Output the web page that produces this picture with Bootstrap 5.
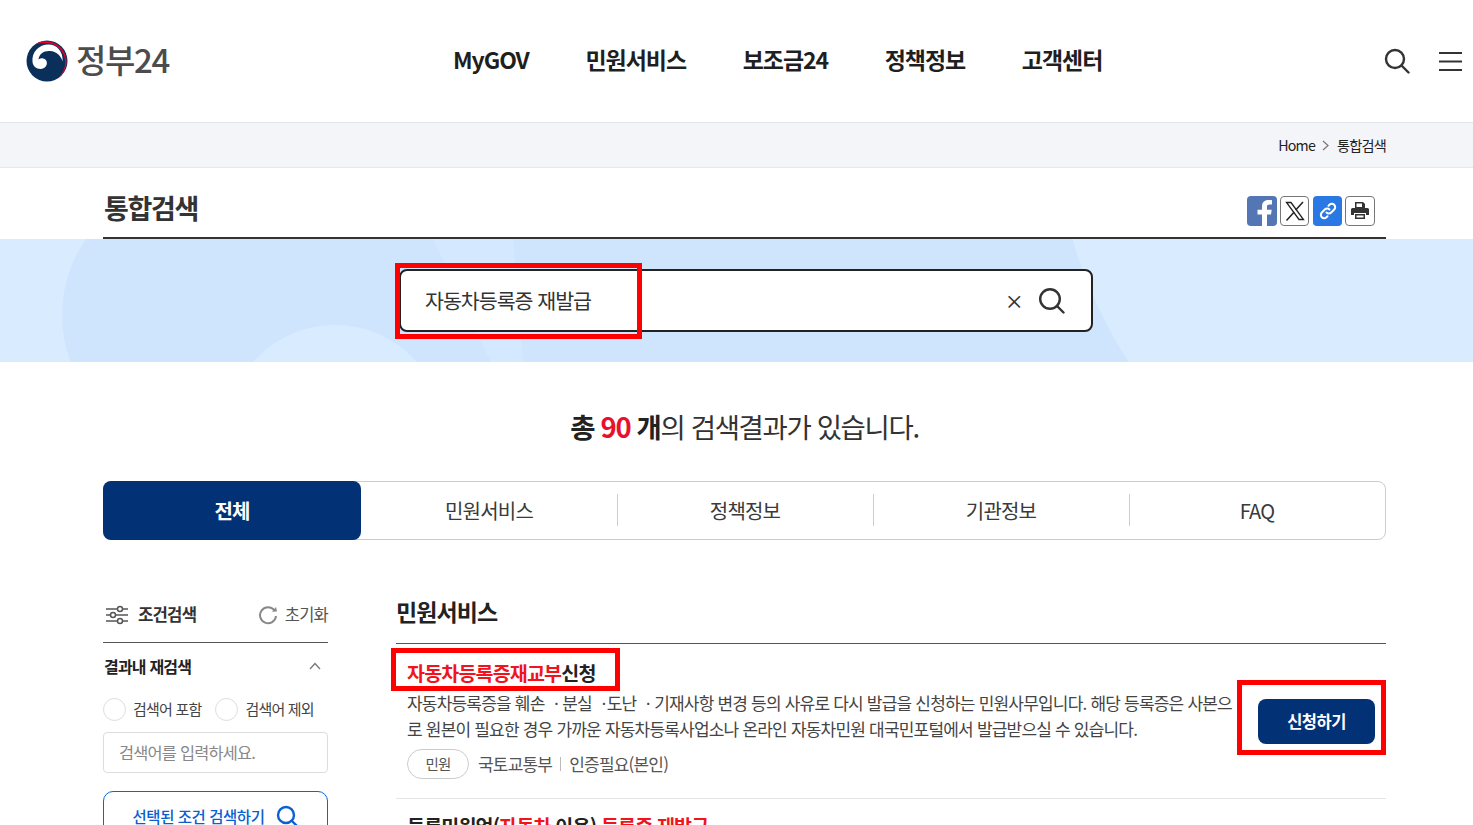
<!DOCTYPE html>
<html lang="ko">
<head>
<meta charset="utf-8">
<title>정부24 통합검색</title>
<link href="https://cdn.jsdelivr.net/npm/bootstrap@5.3.0/dist/css/bootstrap.min.css" rel="stylesheet">
<style>
html,body{height:825px;overflow:hidden;}
body{font-family:"Noto Sans CJK KR","Noto Sans",sans-serif;color:#222;background:#fff;letter-spacing:-.05em;}
a{text-decoration:none;color:inherit;}
.page{height:825px;overflow:hidden;position:relative;}
.top-bar{height:122px;padding:0 11px 0 26px;}
.logo-txt{font-size:33px;font-weight:500;color:#4c4c4c;letter-spacing:-.04em;line-height:1;margin-left:8px;padding-bottom:3px;}
.logo-wrap{width:300px;padding-bottom:1px;}
.gnb{gap:56.6px;font-size:23px;font-weight:700;color:#1f1f1f;margin-left:127px;letter-spacing:-.045em;padding-bottom:4px;}
.crumb-bar{height:46px;background:#f4f5f9;border-top:1px solid #e3e5ec;border-bottom:1px solid #e8e8e8;padding:1px 87px 0 0;font-size:14.2px;color:#222;}
.chev{margin:0 7.5px;}
.wrapx{width:1283px;margin-left:103px;}
.title-row{height:71px;border-bottom:2px solid #333;padding-top:21px;}
.page-title{font-size:27px;font-weight:700;color:#333;margin:-1px 0 0 1px;line-height:39px;letter-spacing:-.05em;}
.share{gap:3px;padding-top:7px;margin-right:11px;}
.sbtn{width:30px;height:30px;border-radius:4px;border:1px solid #777;background:#fff;}
.sbtn.fb{background:#5476b4;border:0;overflow:hidden;}
.sbtn.lnk{background:#2a78e4;border:0;width:29px;margin-left:1px;}
.sbtn.xb{width:29px;}
.band{height:123px;background:#cfe5fe;position:relative;overflow:hidden;padding-top:30px;}
.shape{position:absolute;display:block;}
.left-pale{left:0;top:0;width:194px;height:123px;background:#d9ebff;}
.left-circ{left:62px;top:-56px;width:264px;height:264px;border-radius:50%;background:#cfe5fe;}
.faint{left:433px;top:0;width:90px;height:123px;background:#d4e8ff;clip-path:polygon(0 0,89% 0,100% 100%,64% 100%);}
.mid-circ{left:226px;top:86px;width:218px;height:218px;border-radius:50%;background:#d9ebff;}
.right-circ{left:1055px;top:-574px;width:900px;height:900px;border-radius:50%;background:#d9ebff;}
.sbox{position:relative;width:694px;height:63px;margin-left:399px;background:#fff;border:2px solid #222;border-radius:8px;padding:0 26px 0 24px;}
.sbox input{border:0;outline:0;flex:1;font-size:20.6px;letter-spacing:-.05em;color:#333;background:transparent;padding:0;}
.clear-x{font-size:19px;font-weight:500;color:#333;margin-right:15px;line-height:1;}
.count{font-size:27.5px;text-align:center;margin:44px 0 0;line-height:40px;height:40px;color:#333;letter-spacing:-.05em;}
.count b{font-weight:700;color:#222;}
.count em{font-style:normal;font-weight:700;color:#e8112d;}
.tabsx{margin-top:35px;height:59px;border:1px solid #ccc;border-radius:8px;font-size:20px;color:#3a3a3a;}
.tabx{flex:1 1 0;display:flex;align-items:center;justify-content:center;position:relative;}
.tabx+.tabx::before{content:"";position:absolute;left:0;top:12px;bottom:13px;width:1px;background:#ccc;}
.tabx.on{flex:0 0 258px;margin:-1px 0 -1px -1px;background:#033175;color:#fff;border-radius:8px;font-weight:700;}
.tabx.on+.tabx::before{display:none;}
.cols{margin-top:54px;gap:68px;}
.side{width:225px;flex:none;}
.side-head{height:49px;border-bottom:1px solid #555;padding:0 0 7px 3px;font-size:16.7px;}
.side-head b{font-weight:700;color:#333;margin-left:10px;}
.reset{font-size:16.5px;color:#555;margin-left:auto;gap:7px;}
.sub-h{height:49px;font-size:16px;font-weight:700;color:#222;padding:0 7px 4px 1px;}
.radio-row{font-size:15px;color:#444;height:34px;}
.rd{width:23px;height:23px;border:1px solid #ddd;border-radius:50%;margin-right:7px;display:inline-block;flex:none;}
.kw{margin-top:6px;height:41px;border:1px solid #ddd;border-radius:4px;font-size:16.4px;color:#888;padding:0 15px 1px;display:flex;align-items:center;}
.apply{margin-top:18px;height:60px;border:1px solid #0b64d8;border-radius:10px;color:#0b5fd0;font-size:15.5px;font-weight:500;padding-top:13px;gap:12px;align-items:flex-start;letter-spacing:-.03em;}
.main-col{flex:1;min-width:0;}
.sec-h{font-size:23px;font-weight:700;color:#222;height:47px;border-bottom:1px solid #555;margin:3px 0 0;line-height:28px;letter-spacing:-.04em;}
.res{padding:0 11px;border-bottom:1px solid #e5e5e5;height:155px;gap:26px;}
.res-body{width:826px;flex:none;}
.res-t{font-size:19.5px;font-weight:700;line-height:28px;margin-top:15px;color:#222;}
.res-t i{font-style:normal;color:#f0141e;}
.res-d{font-size:17px;line-height:26px;color:#444;margin:3px 0 0;word-break:break-all;}
.dot-a{letter-spacing:-.11em;}
.dot-b{letter-spacing:-.285em;}
.meta{margin-top:7px;font-size:17px;color:#555;gap:9px;}
.pill{width:62px;height:30px;border:1px solid #ccc;border-radius:15px;font-size:14.5px;color:#555;display:flex;align-items:center;justify-content:center;}
.sep{width:1px;height:14px;background:#bbb;margin:0 -1px;}
.go{width:117px;height:45px;background:#033175;color:#fff;border-radius:8px;font-size:16.5px;font-weight:700;border:0;padding:0;margin-top:55px;margin-left:-1px;letter-spacing:-.03em;}
.res2{padding:13px 11px 0;font-size:19.5px;font-weight:700;color:#222;line-height:28px;}
.res2 i{font-style:normal;color:#f0141e;}
.redbox{position:absolute;border:5px solid #f00;pointer-events:none;}
.r1{left:395px;top:263px;width:247px;height:76px;}
.r2{left:391px;top:648px;width:229px;height:43px;}
.r3{left:1237px;top:680px;width:149px;height:75px;}
</style>
</head>
<body>
<div class="page">
  <header class="top-bar d-flex align-items-center">
    <a href="#" class="logo-wrap d-flex align-items-center">
      <svg width="42" height="42" viewBox="0 0 42 42"><circle cx="21" cy="21" r="20.5" fill="#0b2f5b"/><path d="M9 4.400A20.500 20.500 0 0 1 31 39C38 33 40.500 25 38.500 17C36 9 29 3.500 21 3C16 2.700 12 3.500 9 4.400Z" fill="#e3002d"/><path d="M6.500 22C5.500 12 13 4.500 22.500 4.500C31 4.500 37.500 12 36.500 21.500C35 15.500 30.500 11.500 24 11C18 10.500 13 14 12.500 19.500C15 17.500 19 18 20.500 21C22 25 19 29 14.500 29C10 29 7 26 6.500 22Z" fill="#fff"/></svg>
      <span class="logo-txt">정부24</span>
    </a>
    <nav class="gnb d-flex"><a href="#">MyGOV</a><a href="#">민원서비스</a><a href="#">보조금24</a><a href="#">정책정보</a><a href="#">고객센터</a></nav>
    <div class="ms-auto d-flex align-items-center" style="gap:29px">
      <svg width="26" height="26" viewBox="0 0 26 26" fill="none" stroke="#333" stroke-width="2.400"><circle cx="11" cy="11" r="9"/><path d="M17.500 17.500L24.500 24.500" stroke-linecap="round"/></svg>
      <svg width="23" height="21" viewBox="0 0 23 21" stroke="#333" stroke-width="2.200"><path d="M0 2h23M0 10.500h23M0 19h23"/></svg>
    </div>
  </header>
  <div class="crumb-bar d-flex align-items-center justify-content-end">
    <span>Home</span>
    <svg class="chev" width="7" height="11" viewBox="0 0 7 11" fill="none" stroke="#777" stroke-width="1.200"><path d="M1 1l5 4.500-5 4.500"/></svg>
    <span>통합검색</span>
  </div>
  <div class="wrapx title-row d-flex justify-content-between">
    <h1 class="page-title">통합검색</h1>
    <div class="share d-flex align-items-start">
      <a href="#" class="sbtn fb d-block"><svg width="30" height="30" viewBox="0 0 30 30"><path d="M20 30V18.500h4l.7-4.700H20v-3c0-1.400.6-2.300 2.500-2.300H25V4.300C24.300 4.200 22.800 4 21.300 4 17.500 4 15 6.300 15 10.300v3.500h-4.500v4.700H15V30z" fill="#fff"/></svg></a>
      <a href="#" class="sbtn xb d-flex align-items-center justify-content-center"><svg width="20" height="20" viewBox="0 0 20 20" fill="none" stroke="#222"><path d="M1.500 1.500h4.500l12.500 17h-4.500z" stroke-width="1.300"/><path d="M18 1l-7.300 8M9 11.200L1.500 19.500" stroke-width="1.500"/></svg></a>
      <a href="#" class="sbtn lnk d-flex align-items-center justify-content-center"><svg width="20" height="20" viewBox="0 0 20 20" fill="none" stroke="#fff" stroke-width="2" stroke-linecap="round"><path d="M8.500 11.500a3.300 3.300 0 0 0 4.700 0l3-3a3.300 3.300 0 0 0-4.700-4.700l-1 1"/><path d="M11.500 8.500a3.300 3.300 0 0 0-4.700 0l-3 3a3.300 3.300 0 0 0 4.700 4.700l1-1"/></svg></a>
      <a href="#" class="sbtn d-flex align-items-center justify-content-center"><svg width="20" height="20" viewBox="0 0 20 20" fill="#333"><path d="M5 1h8l2 2v4H5z"/><path d="M1 8.500a1.500 1.500 0 0 1 1.500-1.500h15A1.500 1.500 0 0 1 19 8.500V14h-3v-2H4v2H1z"/><path d="M5 13h10v5H5z"/><path d="M6.500 2.500h5.500v3.500H6.500zM6.500 14.500h7v2h-7z" fill="#fff"/></svg></a>
    </div>
  </div>
  <section class="band">
    <span class="shape left-pale"></span><span class="shape left-circ"></span><span class="shape faint"></span><span class="shape mid-circ"></span><span class="shape right-circ"></span>
    <form class="sbox d-flex align-items-center" onsubmit="return false">
      <input type="text" value="자동차등록증 재발급" aria-label="검색어">
      <span class="clear-x">×</span>
      <svg width="27" height="27" viewBox="0 0 27 27" fill="none" stroke="#333" stroke-width="2.400"><circle cx="12" cy="12" r="9.800"/><path d="M19 19l6.500 6.500" stroke-linecap="round"/></svg>
    </form>
  </section>
  <div class="wrapx">
    <p class="count"><b>총 </b><em>90</em><b> 개</b>의 검색결과가 있습니다.</p>
    <div class="tabsx d-flex">
      <a href="#" class="tabx on">전체</a><a href="#" class="tabx">민원서비스</a><a href="#" class="tabx">정책정보</a><a href="#" class="tabx">기관정보</a><a href="#" class="tabx">FAQ</a>
    </div>
    <div class="cols d-flex">
      <aside class="side">
        <div class="side-head d-flex align-items-center">
          <svg width="22" height="20" viewBox="0 0 22 20" fill="#fff" stroke="#555" stroke-width="1.500"><path d="M0 4h22M0 10h22M0 16h22"/><circle cx="14" cy="4" r="2.500"/><circle cx="7" cy="10" r="2.500"/><circle cx="14" cy="16" r="2.500"/></svg>
          <b>조건검색</b>
          <span class="reset d-flex align-items-center"><svg width="20" height="20" viewBox="0 0 20 20" fill="none" stroke="#888" stroke-width="2"><path d="M16.500 5.500A8 8 0 1 0 18 11"/><path d="M14 6.800l5-.3-1-4.500z" fill="#888" stroke="none"/></svg>초기화</span>
        </div>
        <div class="sub-h d-flex align-items-center justify-content-between">
          <span>결과내 재검색</span>
          <svg width="12" height="8" viewBox="0 0 12 8" fill="none" stroke="#777" stroke-width="1.300"><path d="M1 7l5-5.500L11 7"/></svg>
        </div>
        <div class="radio-row d-flex align-items-center">
          <span class="rd"></span><span style="margin-right:14px">검색어 포함</span>
          <span class="rd"></span><span>검색어 제외</span>
        </div>
        <div class="kw">검색어를 입력하세요.</div>
        <a href="#" class="apply d-flex justify-content-center">선택된 조건 검색하기
          <svg width="22" height="22" viewBox="0 0 22 22" fill="none" stroke="#0b5fd0" stroke-width="2.400"><circle cx="10" cy="10" r="8"/><path d="M16 16l5 5"/></svg>
        </a>
      </aside>
      <main class="main-col">
        <h2 class="sec-h">민원서비스</h2>
        <article class="res d-flex">
          <div class="res-body">
            <div class="res-t"><i>자동차등록증재교부</i>신청</div>
            <p class="res-d">자동차등록증을 훼손 <span class="dot-a">ㆍ</span>분실 <span class="dot-b">ㆍ</span>도난 <span class="dot-a">ㆍ</span>기재사항 변경 등의 사유로 다시 발급을 신청하는 민원사무입니다. 해당 등록증은 사본으로 원본이 필요한 경우 가까운 자동차등록사업소나 온라인 자동차민원 대국민포털에서 발급받으실 수 있습니다.</p>
            <div class="meta d-flex align-items-center"><span class="pill">민원</span><span>국토교통부</span><span class="sep"></span><span>인증필요(본인)</span></div>
          </div>
          <button type="button" class="go btn">신청하기</button>
        </article>
        <div class="res2">등록민원업(<i>자동차</i> 이용) <i>등록증 재발급</i></div>
      </main>
    </div>
  </div>
  <span class="redbox r1"></span><span class="redbox r2"></span><span class="redbox r3"></span>
</div>
</body>
</html>
